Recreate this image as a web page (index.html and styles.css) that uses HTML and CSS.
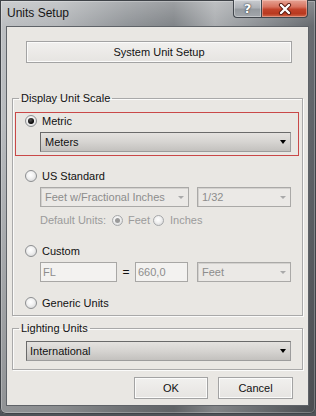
FILE: index.html
```html
<!DOCTYPE html>
<html lang="en">

<head>
    <meta charset="UTF-8" />
    <title>Units Setup</title>
    <link rel="stylesheet" href="styles.css">
</head>

<body>

    <div class="window">
        <!-- title bar -->
        <div class="titlebar">
            <span class="title">Units Setup</span>
            <div class="cap-btn help">?</div>
            <div class="cap-btn close">
                <svg width="14" height="12" viewBox="0 0 14 12">
                    <path d="M3 2 L11 10 M11 2 L3 10" stroke="#5a1a10" stroke-width="4.2" stroke-linecap="round" fill="none" />
                    <path d="M3 2 L11 10 M11 2 L3 10" stroke="#ffffff" stroke-width="2.4" stroke-linecap="round" fill="none" />
                </svg>
            </div>
        </div>

        <!-- dialog body -->
        <div class="client">
            <div class="btn sys-btn">System Unit Setup</div>

            <fieldset class="group scale">
                <legend>Display Unit Scale</legend>

                <div class="highlight">
                    <div class="radio-row"><span class="radio checked"></span>Metric</div>
                    <div class="select meters"><span>Meters</span><span class="arrow"></span></div>
                </div>

                <div class="radio-row us"><span class="radio"></span>US Standard</div>
                <div class="field-row">
                    <div class="select disabled fraction"><span>Feet w/Fractional Inches</span><span class="arrow"></span></div>
                    <div class="select disabled small"><span>1/32</span><span class="arrow"></span></div>
                </div>
                <div class="default-row">
                    <span>Default Units:</span>
                    <span class="radio mini checked grey"></span>
                    <span>Feet</span>
                    <span class="radio mini second"></span>
                    <span>Inches</span>
                </div>

                <div class="radio-row custom"><span class="radio"></span>Custom</div>
                <div class="field-row">
                    <div class="input name">FL</div>
                    <span class="equals">=</span>
                    <div class="input value">660,0</div>
                    <div class="select disabled small"><span>Feet</span><span class="arrow"></span></div>
                </div>

                <div class="radio-row generic"><span class="radio"></span>Generic Units</div>
            </fieldset>

            <fieldset class="group lighting">
                <legend>Lighting Units</legend>
                <div class="select intl"><span>International</span><span class="arrow"></span></div>
            </fieldset>

            <div class="actions">
                <div class="btn ok">OK</div>
                <div class="btn cancel">Cancel</div>
            </div>
        </div>
    </div>

</body>

</html>
```

FILE: styles.css
```css
* {
    box-sizing: border-box;
}

body {
    margin: 0;
    background: #4f5358;
    font-family: "Liberation Sans", Arial, sans-serif;
    font-size: 11px;
    color: #111;
}

/* --- WINDOW FRAME --- */
.window {
    width: 316px;
    height: 414px;
    border-radius: 0 0 6px 6px;
    background:
        linear-gradient(180deg, rgba(255, 255, 255, 0.28) 0, rgba(255, 255, 255, 0.05) 26px, rgba(0, 0, 0, 0) 120px, rgba(0, 0, 0, 0.22) 100%),
        linear-gradient(90deg, #b9bcbf 0%, #b0b3b6 18%, #8c9094 40%, #7a7e82 55%, #a6a9ac 68%, #8b8f93 80%, #5d6166 100%);
    box-shadow: inset 0 0 0 1px #3f4348, inset 0 0 0 2px rgba(255, 255, 255, 0.25);
    overflow: hidden;
}

.titlebar {
    display: flex;
    align-items: flex-start;
    height: 26px;
    padding-right: 8px;
}

.title {
    font-size: 12px;
    line-height: 26px;
    padding-left: 7px;
    color: #151515;
    margin-right: auto;
}

.cap-btn {
    height: 18px;
    display: flex;
    align-items: center;
    justify-content: center;
    border: 1px solid #41464c;
    border-top: none;
}

.cap-btn.help {
    width: 28px;
    border-radius: 0 0 0 4px;
    border-right: none;
    background: linear-gradient(180deg, #c9ccd0 0%, #aeb2b7 45%, #959a9f 55%, #a3a7ac 100%);
    box-shadow: inset 0 0 0 1px rgba(255, 255, 255, 0.35);
    color: #fff;
    font: bold 13px "DejaVu Sans", sans-serif;
    text-shadow: 0 0 2px #33383d, 0 0 1px #33383d;
}

.cap-btn.close {
    width: 47px;
    border-radius: 0 0 4px 0;
    background: linear-gradient(180deg, #e6a394 0%, #d8735f 40%, #c2432b 55%, #b9391f 80%, #d06a4d 100%);
    box-shadow: inset 0 0 0 1px rgba(255, 220, 210, 0.4);
}

.client {
    margin-left: 6px;
    width: 303px;
    height: 380px;
    border: 1px solid #5f6368;
    background: #e9e7e3;
    padding-top: 14px;
}

/* --- BUTTONS --- */
.btn {
    height: 22px;
    display: flex;
    align-items: center;
    justify-content: center;
    border: 1px solid #a3a3a3;
    background: linear-gradient(180deg, #f1f0ee 0%, #e6e4e1 100%);
    box-shadow: inset 0 0 0 1px #fbfbfa;
    font-size: 11px;
}

.sys-btn {
    margin-left: 19px;
    width: 266px;
}

.actions {
    display: flex;
    justify-content: flex-end;
    gap: 10px;
    margin-top: 7px;
    padding-right: 15px;
}

.actions .ok {
    width: 74px;
}

.actions .cancel {
    width: 75px;
}

/* --- GROUP BOXES --- */
.group {
    margin: 0 0 0 5px;
    padding: 0;
    width: 291px;
    border: 1px solid #a9a9a9;
    box-shadow: inset 1px 1px 0 #fbfbfa, 1px 1px 0 #fbfbfa;
    min-width: 0;
}

.group legend {
    margin-left: 6px;
    padding: 0 2px;
    line-height: 14px;
    font-size: 11px;
}

.scale {
    margin-top: 28px;
    padding-bottom: 4px;
}

.lighting {
    margin-top: 5px;
    padding-bottom: 8px;
}

.highlight {
    margin: 7px 0 0 2px;
    width: 284px;
    height: 44px;
    border: 1px solid #c94848;
    padding: 0 0 0 9px;
}

/* --- RADIOS --- */
.radio-row {
    display: flex;
    align-items: center;
    height: 16px;
}

.radio-row.us {
    margin: 12px 0 0 12px;
}

.radio-row.custom {
    margin: 16px 0 0 12px;
}

.radio-row.generic {
    margin: 13px 0 0 12px;
}

.radio {
    width: 12px;
    height: 12px;
    border-radius: 50%;
    border: 1px solid #8d8f91;
    background: radial-gradient(circle at 45% 40%, #ffffff 0%, #f2f2f2 40%, #cfd0d1 100%);
    margin-right: 5px;
    display: flex;
    align-items: center;
    justify-content: center;
    flex: none;
}

.radio.checked::after {
    content: "";
    width: 6px;
    height: 6px;
    border-radius: 50%;
    background: radial-gradient(circle at 40% 35%, #555 0%, #000 70%);
}

.radio.mini {
    width: 11px;
    height: 11px;
    border-color: #a6a8aa;
    margin: 0 5px 0 6px;
}

.radio.mini.second {
    margin: 0 6px 0 3px;
}

.radio.grey::after {
    width: 5px;
    height: 5px;
    background: #9a9a9a;
}

/* --- DROPDOWNS & INPUTS --- */
.select {
    height: 20px;
    display: flex;
    align-items: center;
    justify-content: space-between;
    padding: 0 4px;
    border: 1px solid #9c9c9c;
    border-top-color: #6a6a6a;
    border-left-color: #6a6a6a;
    background: linear-gradient(180deg, #e4e2df 0%, #d6d4d1 50%, #c3c1be 100%);
    font-size: 11px;
}

.select .arrow {
    width: 0;
    height: 0;
    border-left: 3.5px solid transparent;
    border-right: 3.5px solid transparent;
    border-top: 4px solid #000;
}

.meters {
    margin-top: 3px;
    margin-left: 15px;
    width: 251px;
}

.intl {
    margin: 6px 0 0 13px;
    width: 265px;
    padding-left: 3px;
}

.select.disabled {
    background: #ebe9e6;
    border: 1px solid #aaa9a7;
    box-shadow: inset 1px 1px 0 #d3d1ce;
    color: #8d8d8d;
}

.select.disabled .arrow {
    border-top: 3px solid #a9a9a9;
}

.field-row {
    display: flex;
    align-items: center;
    margin: 3px 0 0 27px;
}

.fraction {
    width: 149px;
    margin-right: 8px;
}

.select.small {
    width: 94px;
}

.default-row {
    display: flex;
    align-items: center;
    height: 14px;
    margin: 6px 0 0 27px;
    color: #9b9b9b;
}

.input {
    height: 20px;
    display: flex;
    align-items: center;
    padding-left: 2px;
    border: 1px solid #a8a7a5;
    background: #f3f2f0;
    color: #8d8d8d;
}

.input.name {
    width: 77px;
}

.input.value {
    width: 53px;
    margin-right: 9px;
}

.equals {
    width: 18px;
    text-align: center;
    font-size: 12px;
}
```
